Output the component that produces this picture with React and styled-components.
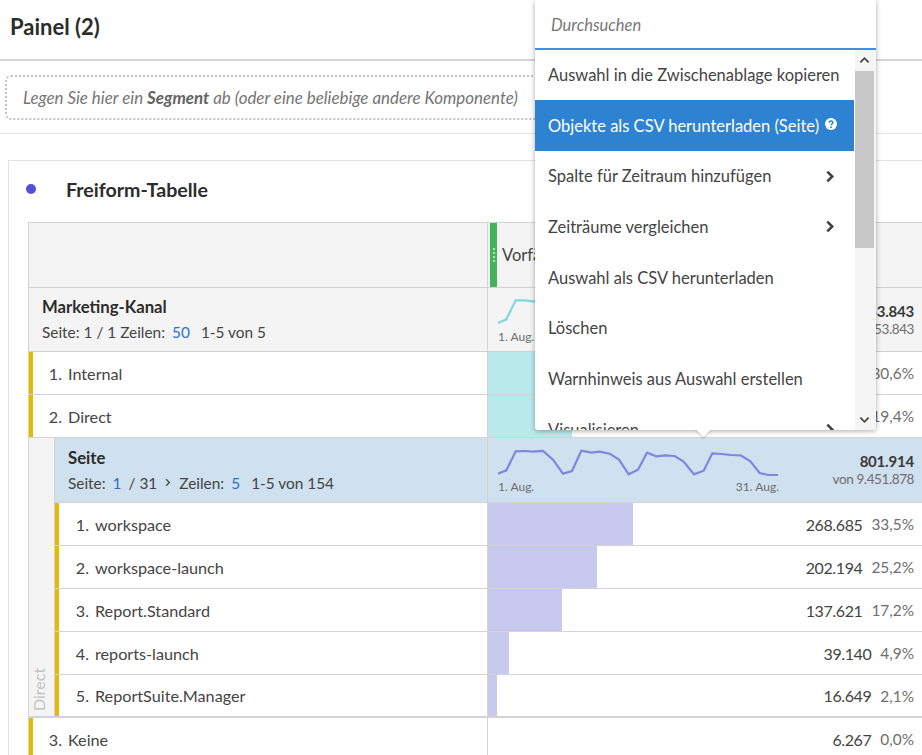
import React from 'react'
import styled, { createGlobalStyle } from 'styled-components'

const colors = {
  text: '#444',
  dark: '#2c2c2c',
  grey: '#6e6e6e',
  line: '#d3d3d3',
  head: '#f4f4f4',
  link: '#2b72c8',
  yellow: '#e3bb00',
  selected: '#2d82d2',
  blue: '#cfe0ee',
  teal: '#b9e9ea',
  purple: '#c9c9f0',
}

const GlobalStyle = createGlobalStyle`
  html, body { margin: 0; padding: 0; background: #fff; }
  body { font-family: Lato, "Open Sans", sans-serif; color: ${colors.text}; }
`

const Page = styled.div`
  position: relative;
  width: 922px;
  height: 755px;
  overflow: hidden;
  background: #fff;
`
const PanelHeader = styled.header`
  display: flex;
  align-items: center;
  box-sizing: border-box;
  height: 61px;
  padding: 0 0 6px 10px;
  border-bottom: 2px solid #d4d4d4;
  font-size: 22px;
  font-weight: 700;
  color: ${colors.dark};
`
const DropRow = styled.div`
  box-sizing: border-box;
  height: 73px;
  padding: 14px 0 0 5px;
  border-bottom: 1px solid #e6e6e6;
`
const DropZone = styled.div`
  display: flex;
  align-items: center;
  box-sizing: border-box;
  width: 700px;
  height: 45px;
  padding-left: 16px;
  border: 2px dotted #c2c2c2;
  border-radius: 6px;
  font-size: 16.9px;
  font-style: italic;
  color: #757575;
  b { font-weight: 700; color: #636363; }
`
const Card = styled.section`
  box-sizing: border-box;
  width: 915px;
  margin: 26px 0 0 8px;
  padding: 0 0 0 19px;
  border: 1px solid #e2e2e2;
  border-bottom: 0;
`
const CardTitle = styled.div`
  display: flex;
  align-items: center;
  box-sizing: border-box;
  height: 61px;
  padding-bottom: 5px;
  font-size: 19.6px;
  font-weight: 700;
  color: ${colors.dark};
`
const Dot = styled.span`
  width: 10px;
  height: 10px;
  margin: 0 30px 0 -2px;
  border-radius: 50%;
  background: #5350d8;
`
const Table = styled.div`
  border-top: 1px solid ${colors.line};
  border-left: 1px solid ${colors.line};
`
const Row = styled.div`
  display: grid;
  grid-template-columns: ${p => p.$left || 459}px 1fr;
  box-sizing: border-box;
  height: ${p => p.$h || 43}px;
  border-bottom: ${p => p.$thick ? 2 : 1}px solid ${colors.line};
  background: ${p => p.$bg || '#fff'};
`
const LeftCell = styled.div`
  display: flex;
  flex-direction: column;
  justify-content: center;
  padding-left: 13px;
  border-right: 1px solid ${colors.line};
`
const ColumnLabel = styled.div`
  display: flex;
  align-items: stretch;
  overflow: hidden;
  padding-left: 2px;
  font-size: 16.5px;
`
const DragHandle = styled.span`
  display: flex;
  flex-direction: column;
  align-items: center;
  justify-content: center;
  gap: 2px;
  width: 7px;
  margin-right: 5px;
  background: #45b35a;
  i { width: 2px; height: 2px; border-radius: 50%; background: #d8f0dc; }
`
const LabelText = styled.span`
  align-self: center;
  color: ${colors.text};
`
const DimTitle = styled.div`
  font-size: 16.7px;
  font-weight: 700;
  line-height: 20px;
  color: ${colors.dark};
`
const Pager = styled.div`
  display: flex;
  align-items: center;
  margin-top: 5px;
  font-size: 15.4px;
  line-height: 20px;
  color: ${colors.text};
  white-space: nowrap;
`
const PagerLink = styled.span`
  margin: 0 ${p => p.$after || 7}px 0 7px;
  color: ${colors.link};
`
const PagerStep = styled.span`
  display: flex;
  margin: 0 7px 0 6px;
`
const Summary = styled.div`
  display: flex;
  justify-content: space-between;
  padding: 9px 8px 0 10px;
`
const Spark = styled.div`
  width: 281px;
`
const SparkDates = styled.div`
  display: flex;
  justify-content: space-between;
  margin-top: -4px;
  font-size: 12px;
  color: ${colors.grey};
`
const Totals = styled.div`
  padding-top: 5px;
  text-align: right;
  line-height: 18px;
  font-size: 13.5px;
  letter-spacing: -0.4px;
  color: ${colors.grey};
  b { display: block; font-size: 15px; letter-spacing: -0.2px; color: #3a3a3a; }
`
const Marker = styled.span`
  flex: none;
  align-self: stretch;
  width: 4px;
  background: ${colors.yellow};
`
const NameCell = styled.div`
  display: flex;
  align-items: center;
  border-right: 1px solid ${colors.line};
  font-size: 16.2px;
  color: ${colors.text};
`
const Rank = styled.span`
  width: ${p => p.$w}px;
  margin-right: 6px;
  text-align: right;
`
const ValueCell = styled.div`
  position: relative;
  display: flex;
  align-items: center;
  justify-content: flex-end;
  gap: 9px;
  padding-right: 8px;
  font-size: 16px;
`
const Bar = styled.span`
  position: absolute;
  top: 0;
  bottom: 0;
  left: 0;
  width: ${p => p.$pct * 4.33}px;
  background: ${p => p.$color};
`
const Value = styled.span`
  position: relative;
  letter-spacing: -0.4px;
  color: #444;
`
const Percent = styled.span`
  position: relative;
  font-size: 15.4px;
  color: ${colors.grey};
`
const Breakdown = styled.div`
  display: flex;
`
/* rotated 180deg, so left/top here land on the right/bottom on screen */
const SideLabel = styled.div`
  display: flex;
  align-items: center;
  box-sizing: border-box;
  flex: none;
  width: 26px;
  padding: 5px 0 5px 6px;
  border-top: 2px solid ${colors.line};
  border-left: 1px solid ${colors.line};
  background: ${colors.head};
  color: #c2c2c2;
  font-size: 16px;
  writing-mode: vertical-rl;
  transform: rotate(180deg);
`
const SubRows = styled.div`
  flex: 1;
`

/* context menu sits over the table */
const Menu = styled.div`
  position: absolute;
  top: 0;
  left: 535px;
  width: 341px;
  height: 430px;
  background: #fff;
  border-radius: 0 0 4px 4px;
  box-shadow: 0 1px 5px rgba(0, 0, 0, 0.35);
`
const Caret = styled.span`
  position: absolute;
  left: 163px;
  bottom: -5px;
  width: 11px;
  height: 11px;
  background: #fff;
  transform: rotate(45deg);
  box-shadow: 1px 1px 2px rgba(0, 0, 0, 0.18);
`
const MenuInner = styled.div`
  position: relative;
  display: flex;
  flex-direction: column;
  height: 100%;
  overflow: hidden;
  border-radius: 0 0 4px 4px;
  background: #fff;
`
const Search = styled.input`
  flex: none;
  box-sizing: border-box;
  width: 100%;
  height: 49.5px;
  padding: 3px 0 0 16px;
  border: 0;
  border-bottom: 2px solid #3f8fe6;
  outline: 0;
  font: italic 16.5px Lato, sans-serif;
  &::placeholder { color: #787878; opacity: 1; }
`
const MenuBody = styled.div`
  display: flex;
  flex: 1;
  min-height: 0;
`
const MenuList = styled.div`
  flex: 1;
  min-width: 0;
`
const MenuItem = styled.div`
  display: flex;
  align-items: center;
  box-sizing: border-box;
  height: 50.7px;
  padding: 0 18px 0 13px;
  font-size: 16.5px;
  white-space: nowrap;
  color: ${p => p.$active ? '#fff' : colors.text};
  background: ${p => p.$active ? colors.selected : 'transparent'};
  svg { flex: none; }
`
const ItemLabel = styled.span`
  flex: 1;
`
const ScrollBar = styled.div`
  display: flex;
  flex: none;
  flex-direction: column;
  align-items: center;
  box-sizing: border-box;
  width: 21px;
  margin-left: 1px;
  padding-right: 2px;
  background: #f5f5f5;
`
const ScrollArrow = styled.span`
  display: flex;
  flex: none;
  align-items: center;
  justify-content: center;
  height: 21px;
  margin-top: ${p => p.$push ? 'auto' : 0};
`
const ScrollThumb = styled.span`
  flex: none;
  width: 100%;
  height: 177px;
  background: #c8c8c8;
`

const Chevron = ({ dir = 'right', size = 13, color = '#444', width = 2.4 }) => {
  const paths = {
    right: 'M4 1.5 L8.5 6 L4 10.5',
    up: 'M1.5 8 L6 3.5 L10.5 8',
    down: 'M1.5 4 L6 8.5 L10.5 4',
  }
  return (
    <svg width={size} height={size} viewBox="0 0 12 12" fill="none">
      <path d={paths[dir]} stroke={color} strokeWidth={width} />
    </svg>
  )
}

const HelpBadge = styled.svg`
  margin: 0 0 3px 6px;
`

const HelpIcon = () => (
  <HelpBadge width="12" height="12" viewBox="0 0 12 12">
    <circle cx="6" cy="6" r="6" fill="#fff" />
    <path d="M4.2 4.7 C4.2 2.6 7.9 2.6 7.9 4.6 C7.9 5.9 6 5.8 6 7.3" fill="none" stroke={colors.selected} strokeWidth="1.5" />
    <circle cx="6" cy="9.2" r="0.95" fill={colors.selected} />
  </HelpBadge>
)

const SparkSvg = styled.svg`
  display: block;
`

const bigSpark = [
  [55, 160], [80, 150], [108, 93], [135, 92], [160, 94], [190, 92], [220, 118], [250, 160],
  [277, 152], [305, 91], [335, 97], [360, 94], [390, 100], [418, 118], [447, 162], [475, 148],
  [502, 97], [530, 108], [555, 105], [585, 107], [612, 124], [643, 162], [672, 151], [698, 99],
  [725, 101], [755, 104], [783, 105], [812, 123], [840, 158], [865, 164], [895, 164],
]
const tealSpark = [[55, 158], [80, 147], [108, 90], [135, 90], [160, 93], [200, 92]]

const Sparkline = ({ points, color }) => (
  <SparkSvg width="281" height="36" viewBox="0 0 281 36" fill="none">
    <polyline
      points={points.map(([x, y]) => `${(x - 55) / 3},${(y - 80) / 3}`).join(' ')}
      stroke={color}
      strokeWidth="2.2"
    />
  </SparkSvg>
)

const topRows = [
  { rank: '1.', name: 'Internal', pct: 80.6, value: '7.652.000', share: '80,6%' },
  { rank: '2.', name: 'Direct', pct: 19.4, value: '1.801.000', share: '19,4%' },
]
const subRows = [
  { rank: '1.', name: 'workspace', pct: 33.5, value: '268.685', share: '33,5%' },
  { rank: '2.', name: 'workspace-launch', pct: 25.2, value: '202.194', share: '25,2%' },
  { rank: '3.', name: 'Report.Standard', pct: 17.2, value: '137.621', share: '17,2%' },
  { rank: '4.', name: 'reports-launch', pct: 4.9, value: '39.140', share: '4,9%' },
  { rank: '5.', name: 'ReportSuite.Manager', pct: 2.1, value: '16.649', share: '2,1%', thick: true },
]
const menuItems = [
  { label: 'Auswahl in die Zwischenablage kopieren' },
  { label: 'Objekte als CSV herunterladen (Seite)', active: true, help: true },
  { label: 'Spalte für Zeitraum hinzufügen', more: true },
  { label: 'Zeiträume vergleichen', more: true },
  { label: 'Auswahl als CSV herunterladen' },
  { label: 'Löschen' },
  { label: 'Warnhinweis aus Auswahl erstellen' },
  { label: 'Visualisieren', more: true },
]

const DataRow = ({ row, left, rankWidth, color }) => (
  <Row $left={left} $thick={row.thick}>
    <NameCell>
      <Marker />
      <Rank $w={rankWidth}>{row.rank}</Rank>
      {row.name}
    </NameCell>
    <ValueCell>
      {row.pct > 0 && <Bar $pct={row.pct} $color={color} />}
      <Value>{row.value}</Value>
      <Percent>{row.share}</Percent>
    </ValueCell>
  </Row>
)

const App = () => (
  <Page>
    <GlobalStyle />
    <PanelHeader>Painel (2)</PanelHeader>
    <DropRow>
      <DropZone>
        <span>Legen Sie hier ein <b>Segment</b> ab (oder eine beliebige andere Komponente)</span>
      </DropZone>
    </DropRow>
    <Card>
      <CardTitle>
        <Dot />
        Freiform-Tabelle
      </CardTitle>
      <Table>
        <Row $h={65} $bg={colors.head}>
          <LeftCell />
          <ColumnLabel>
            <DragHandle><i /><i /><i /><i /></DragHandle>
            <LabelText>Vorfälle</LabelText>
          </ColumnLabel>
        </Row>
        <Row $h={64} $bg={colors.head}>
          <LeftCell>
            <DimTitle>Marketing-Kanal</DimTitle>
            <Pager>
              Seite: 1 / 1 Zeilen:
              <PagerLink $after={11}>50</PagerLink>
              1-5 von 5
            </Pager>
          </LeftCell>
          <Summary>
            <Spark>
              <Sparkline points={tealSpark} color="#7fd8df" />
              <SparkDates><span>1. Aug.</span><span>31. Aug.</span></SparkDates>
            </Spark>
            <Totals>
              <b>9.453.843</b>
              von 9.453.843
            </Totals>
          </Summary>
        </Row>
        {topRows.map(row => (
          <DataRow key={row.rank} row={row} left={459} rankWidth={29} color={colors.teal} />
        ))}
        <Breakdown>
          <SideLabel>Direct</SideLabel>
          <SubRows>
            <Row $left={433} $h={65} $bg={colors.blue}>
              <LeftCell>
                <DimTitle>Seite</DimTitle>
                <Pager>
                  Seite:
                  <PagerLink>1</PagerLink>
                  / 31
                  <PagerStep><Chevron size={9} width={1.8} /></PagerStep>
                  Zeilen:
                  <PagerLink $after={11}>5</PagerLink>
                  1-5 von 154
                </Pager>
              </LeftCell>
              <Summary>
                <Spark>
                  <Sparkline points={bigSpark} color="#7f86e0" />
                  <SparkDates><span>1. Aug.</span><span>31. Aug.</span></SparkDates>
                </Spark>
                <Totals>
                  <b>801.914</b>
                  von 9.451.878
                </Totals>
              </Summary>
            </Row>
            {subRows.map(row => (
              <DataRow key={row.rank} row={row} left={433} rankWidth={30} color={colors.purple} />
            ))}
          </SubRows>
        </Breakdown>
        <DataRow row={{ rank: '3.', name: 'Keine', pct: 0, value: '6.267', share: '0,0%' }} left={459} rankWidth={29} />
      </Table>
    </Card>

    <Menu>
      <Caret />
      <MenuInner>
        <Search placeholder="Durchsuchen" />
        <MenuBody>
          <MenuList>
            {menuItems.map(item => (
              <MenuItem key={item.label} $active={item.active}>
                {item.help ? item.label : <ItemLabel>{item.label}</ItemLabel>}
                {item.help && <HelpIcon />}
                {item.more && <Chevron />}
              </MenuItem>
            ))}
          </MenuList>
          <ScrollBar>
            <ScrollArrow><Chevron dir="up" size={11} width={2} /></ScrollArrow>
            <ScrollThumb />
            <ScrollArrow $push><Chevron dir="down" size={11} width={2} /></ScrollArrow>
          </ScrollBar>
        </MenuBody>
      </MenuInner>
    </Menu>
  </Page>
)

export default App
